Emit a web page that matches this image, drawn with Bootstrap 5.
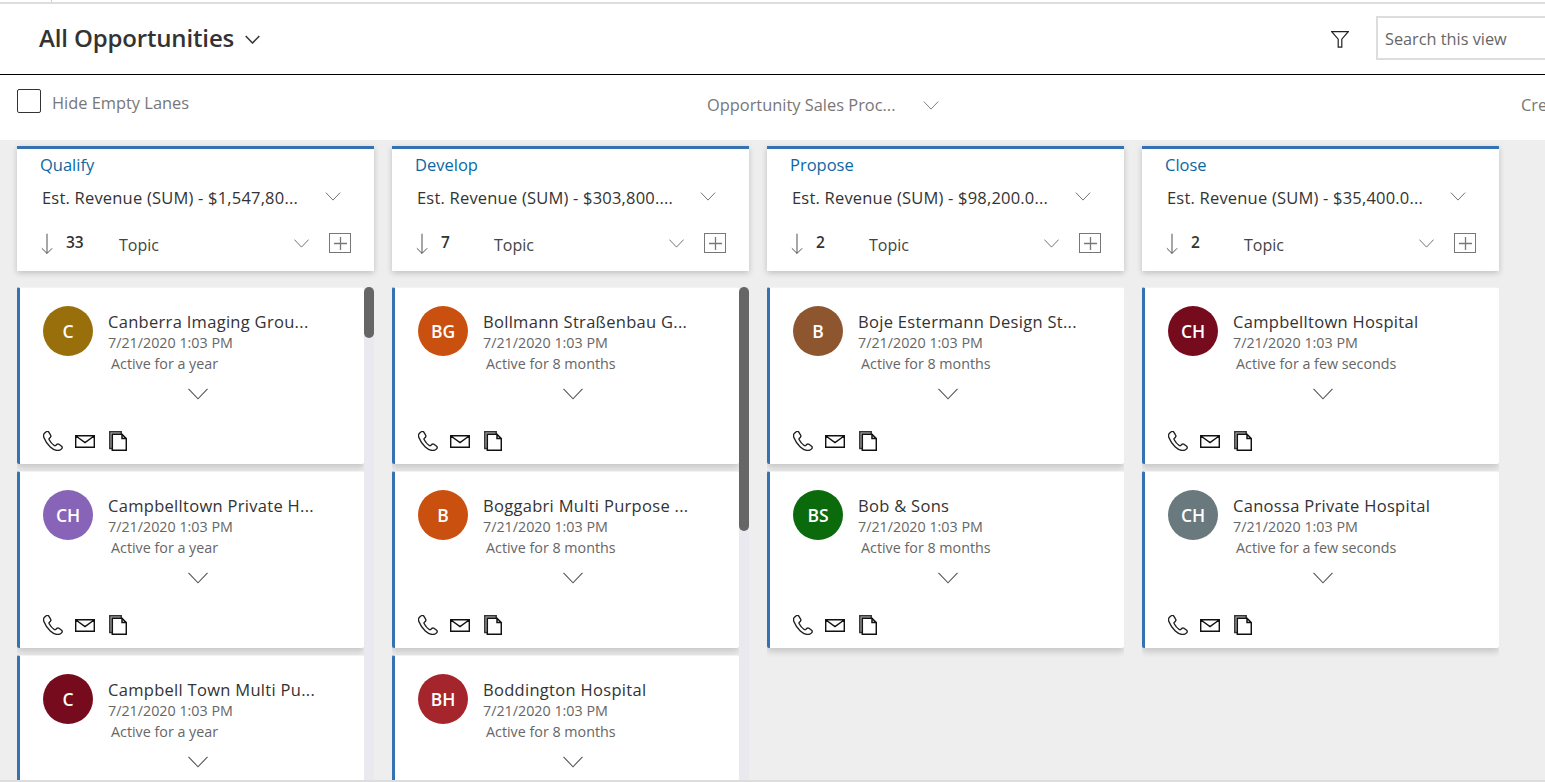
<!DOCTYPE html>
<html lang="en">
<head>
<meta charset="utf-8">
<title>All Opportunities</title>
<link href="https://cdn.jsdelivr.net/npm/bootstrap@5.3.0/dist/css/bootstrap.min.css" rel="stylesheet">
<style>
html,body{height:782px;overflow:hidden;background:#fff}
body{font-family:"Open Sans","Noto Sans",sans-serif;color:#333;font-size:14px}
.topline{height:4px;border-bottom:2px solid #ddd}
.topline i{display:block;width:1px;height:2px;margin-left:51px;background:#ccc}
.viewhead{height:71px;border-bottom:1px solid #000;padding-left:39px}
.viewtitle{font-size:24px;font-weight:600;color:#333;letter-spacing:-.15px;margin:0 11px 3px 0;line-height:1}
.searchbox{flex:0 0 169px;height:44px;margin:0 0 2px 27px;border:2px solid #ddd;border-right:0;padding:2px 0 0 7px;font-size:16.3px;color:#666}
.toolbar{height:65px;padding-left:17px;color:#777;font-size:16.400px;white-space:nowrap}
.fakecheck{width:24px;height:24px;border:1px solid #333;border-radius:2px;margin:-14px 11px 0 0;flex:none}
.hidelabel{flex:0 0 655px;margin-top:-9px}
.procname{flex:0 0 216px;margin-top:-4px}
.procchev{margin:-4px 582px 0 0;flex:none}
.crelabel{flex:none;margin-top:-4px}
.board{height:642px;background:#eee;border-bottom:2px solid #ddd;padding:6px 0 0 17px;gap:18px;overflow:hidden}
.lane{flex:0 0 357px;min-width:0}
.lanehead{height:125px;background:#fff;border-top:3px solid #3572b4;box-shadow:0 2px 6px rgba(0,0,0,.2);padding:5px 23px 0 23px;margin-bottom:16px}
.stage{font-size:16.5px;line-height:22px;color:#0b68a4}
.sumrow{margin-top:11px;margin-left:2px;height:22px;font-size:16.5px;font-weight:500;color:#333;letter-spacing:.2px;white-space:nowrap}
.sumtext{flex:0 0 283px}
.sortrow{margin-top:22px;height:26px;padding-left:1px}
.sortcount{flex:0 0 53px;font-size:15.500px;font-weight:600;margin:-3px 0 0 13px;color:#333}
.sorttopic{flex:0 0 175px;font-size:16px;color:#444;margin-top:1px}
.sortchev{margin-bottom:2px;color:#555;flex:none}
.addbox{width:22px;height:20px;border:1.5px solid #777;margin:-2px 0 0 20px;flex:none}
.lanebody{height:493px;overflow:hidden;position:relative}
.lanescroll{width:357px}
.lanebar{position:absolute;right:0;top:0;bottom:0;width:10px;background:#e9e9ef}
.lanebar i{display:block;width:10px;background:#666;border-radius:5px}
.lanecard{width:347px;height:177px;background:#fff;border-left:3px solid #3572b4;border-radius:2px;box-shadow:0 4px 6px rgba(0,0,0,.16);margin-bottom:7px;padding:18px 0 0 23px;border-top:1px solid #f3f3f3}
.lanecard.wide{width:357px}
.persona{width:50px;height:50px;border-radius:50%;color:#fff;font-size:17.5px;font-weight:600;flex:none;margin-right:15px}
.cardname{font-size:16.5px;font-weight:500;color:#333;letter-spacing:.3px;line-height:22px;margin-top:5px;white-space:nowrap}
.carddate{font-size:14.300px;color:#666;line-height:19px}
.cardage{font-size:14.300px;color:#666;line-height:20px;margin:2px 0 0 3px}
.cardchev{margin:14px 0 0 145px;height:14px;color:#555}
.cardchev svg{display:block}
.cardicons{margin:29px 0 0 0;gap:12px}
.b1{background:#986f0b}.b2{background:#8764b8}.b3{background:#750b1c}.b4{background:#ca5010}
.b5{background:#a4262c}.b6{background:#8e562e}.b7{background:#0b6a0b}.b8{background:#69797e}
</style>
</head>
<body>
<svg width="0" height="0" class="d-block position-absolute">
<symbol id="chev" viewBox="0 0 20 12"><path d="M.5.8 10 10.800 19.500.8" fill="none" stroke="currentColor" stroke-width="1.100"/></symbol>
<symbol id="phone" viewBox="0 0 20 20"><path d="M3.200.8 1.200 2.600C.2 3.700.4 5.300 1 6.800c1.300 3.300 3.600 6.700 6.300 9.300 2 1.900 4.300 3.100 6.700 3.300 1.900.2 3.500-.2 4.600-1.500.9-1 .8-1.900 0-2.600l-2.600-2c-.8-.6-1.500-.5-2.200.1l-1.100 1.100c-.5.400-1 .4-1.500 0-2-1.500-3.800-3.500-5-5.800-.3-.6-.3-1 .2-1.400l1-1c.6-.7.700-1.400.2-2.100L5.800 1.100C5.100.2 4-.1 3.200.8Z" fill="none" stroke="#222" stroke-width="1.400"/></symbol>
<symbol id="mail" viewBox="0 0 20 13"><path d="M.7.7h18.600v11.600H.7zM.9 1 10 7.600 19.100 1" fill="none" stroke="#111" stroke-width="1.400"/></symbol>
<symbol id="doc" viewBox="0 0 18 20"><path d="M3 17.500H.8V.8h11.400v2.500" fill="#bbb" stroke="#333" stroke-width="1.500"/><path d="M3.300 3.300h9.700l4.300 4.300v11.700h-14zM13 3.300v4.300h4.300" fill="#fff" stroke="#111" stroke-width="1.500"/></symbol>
</svg>

<div class="topline"><i></i></div>
<header class="viewhead d-flex align-items-center">
  <span class="viewtitle">All Opportunities</span>
  <svg width="15" height="9" viewBox="0 0 15 9"><path d="M.7 1 7.500 8 14.300 1" fill="none" stroke="#333" stroke-width="1.500"/></svg>
  <svg class="ms-auto" width="18" height="17" viewBox="0 0 18 17"><path d="M.7.7h16.600l-6.500 7.500v8H7.200v-8z" fill="none" stroke="#222" stroke-width="1.200"/></svg>
  <div class="searchbox d-flex align-items-center">Search this view</div>
</header>
<div class="toolbar d-flex align-items-center">
  <span class="fakecheck"></span>
  <span class="hidelabel">Hide Empty Lanes</span>
  <span class="procname">Opportunity Sales Proc...</span>
  <svg class="procchev" width="16" height="9" style="color:#666"><use href="#chev"/></svg>
  <span class="crelabel">Cre</span>
</div>

<main class="board d-flex">

  <section class="lane">
    <div class="lanehead">
      <div class="stage">Qualify</div>
      <div class="sumrow d-flex align-items-center"><span class="sumtext">Est. Revenue (SUM) - $1,547,80...</span><svg width="16" height="9" style="color:#555" class="mb-1"><use href="#chev"/></svg></div>
      <div class="sortrow d-flex align-items-center">
        <svg width="14" height="24" viewBox="0 0 14 24"><path d="M7 0v23M1 17l6 6 6-6" fill="none" stroke="#444" stroke-width="1.100"/></svg>
        <span class="sortcount">33</span><span class="sorttopic">Topic</span>
        <svg width="15" height="9" class="sortchev"><use href="#chev"/></svg>
        <span class="addbox d-flex align-items-center justify-content-center"><svg width="13" height="13" viewBox="0 0 13 13"><path d="M6.500 0v13M0 6.500h13" stroke="#777" stroke-width="1.300"/></svg></span>
      </div>
    </div>
    <div class="lanebody">
      <div class="lanescroll">
        <article class="lanecard">
          <div class="d-flex"><span class="persona b1 d-flex align-items-center justify-content-center">C</span><div><div class="cardname">Canberra Imaging Grou...</div><div class="carddate">7/21/2020 1:03 PM</div><div class="cardage">Active for a year</div></div></div>
          <div class="cardchev"><svg width="20" height="12"><use href="#chev"/></svg></div>
          <div class="cardicons d-flex"><svg width="20" height="20"><use href="#phone"/></svg><svg width="20" height="13" class="mt-1"><use href="#mail"/></svg><svg width="18" height="20" style="margin-left:2px"><use href="#doc"/></svg></div>
        </article>
        <article class="lanecard">
          <div class="d-flex"><span class="persona b2 d-flex align-items-center justify-content-center">CH</span><div><div class="cardname">Campbelltown Private H...</div><div class="carddate">7/21/2020 1:03 PM</div><div class="cardage">Active for a year</div></div></div>
          <div class="cardchev"><svg width="20" height="12"><use href="#chev"/></svg></div>
          <div class="cardicons d-flex"><svg width="20" height="20"><use href="#phone"/></svg><svg width="20" height="13" class="mt-1"><use href="#mail"/></svg><svg width="18" height="20" style="margin-left:2px"><use href="#doc"/></svg></div>
        </article>
        <article class="lanecard">
          <div class="d-flex"><span class="persona b3 d-flex align-items-center justify-content-center">C</span><div><div class="cardname">Campbell Town Multi Pu...</div><div class="carddate">7/21/2020 1:03 PM</div><div class="cardage">Active for a year</div></div></div>
          <div class="cardchev"><svg width="20" height="12"><use href="#chev"/></svg></div>
        </article>
      </div>
      <div class="lanebar"><i style="height:51px"></i></div>
    </div>
  </section>

  <section class="lane">
    <div class="lanehead">
      <div class="stage">Develop</div>
      <div class="sumrow d-flex align-items-center"><span class="sumtext">Est. Revenue (SUM) - $303,800....</span><svg width="16" height="9" style="color:#555" class="mb-1"><use href="#chev"/></svg></div>
      <div class="sortrow d-flex align-items-center">
        <svg width="14" height="24" viewBox="0 0 14 24"><path d="M7 0v23M1 17l6 6 6-6" fill="none" stroke="#444" stroke-width="1.100"/></svg>
        <span class="sortcount">7</span><span class="sorttopic">Topic</span>
        <svg width="15" height="9" class="sortchev"><use href="#chev"/></svg>
        <span class="addbox d-flex align-items-center justify-content-center"><svg width="13" height="13" viewBox="0 0 13 13"><path d="M6.500 0v13M0 6.500h13" stroke="#777" stroke-width="1.300"/></svg></span>
      </div>
    </div>
    <div class="lanebody">
      <div class="lanescroll">
        <article class="lanecard">
          <div class="d-flex"><span class="persona b4 d-flex align-items-center justify-content-center">BG</span><div><div class="cardname">Bollmann Straßenbau G...</div><div class="carddate">7/21/2020 1:03 PM</div><div class="cardage">Active for 8 months</div></div></div>
          <div class="cardchev"><svg width="20" height="12"><use href="#chev"/></svg></div>
          <div class="cardicons d-flex"><svg width="20" height="20"><use href="#phone"/></svg><svg width="20" height="13" class="mt-1"><use href="#mail"/></svg><svg width="18" height="20" style="margin-left:2px"><use href="#doc"/></svg></div>
        </article>
        <article class="lanecard">
          <div class="d-flex"><span class="persona b4 d-flex align-items-center justify-content-center">B</span><div><div class="cardname">Boggabri Multi Purpose ...</div><div class="carddate">7/21/2020 1:03 PM</div><div class="cardage">Active for 8 months</div></div></div>
          <div class="cardchev"><svg width="20" height="12"><use href="#chev"/></svg></div>
          <div class="cardicons d-flex"><svg width="20" height="20"><use href="#phone"/></svg><svg width="20" height="13" class="mt-1"><use href="#mail"/></svg><svg width="18" height="20" style="margin-left:2px"><use href="#doc"/></svg></div>
        </article>
        <article class="lanecard">
          <div class="d-flex"><span class="persona b5 d-flex align-items-center justify-content-center">BH</span><div><div class="cardname">Boddington Hospital</div><div class="carddate">7/21/2020 1:03 PM</div><div class="cardage">Active for 8 months</div></div></div>
          <div class="cardchev"><svg width="20" height="12"><use href="#chev"/></svg></div>
        </article>
      </div>
      <div class="lanebar"><i style="height:244px"></i></div>
    </div>
  </section>

  <section class="lane">
    <div class="lanehead">
      <div class="stage">Propose</div>
      <div class="sumrow d-flex align-items-center"><span class="sumtext">Est. Revenue (SUM) - $98,200.0...</span><svg width="16" height="9" style="color:#555" class="mb-1"><use href="#chev"/></svg></div>
      <div class="sortrow d-flex align-items-center">
        <svg width="14" height="24" viewBox="0 0 14 24"><path d="M7 0v23M1 17l6 6 6-6" fill="none" stroke="#444" stroke-width="1.100"/></svg>
        <span class="sortcount">2</span><span class="sorttopic">Topic</span>
        <svg width="15" height="9" class="sortchev"><use href="#chev"/></svg>
        <span class="addbox d-flex align-items-center justify-content-center"><svg width="13" height="13" viewBox="0 0 13 13"><path d="M6.500 0v13M0 6.500h13" stroke="#777" stroke-width="1.300"/></svg></span>
      </div>
    </div>
    <div class="lanebody">
      <div class="lanescroll">
        <article class="lanecard wide">
          <div class="d-flex"><span class="persona b6 d-flex align-items-center justify-content-center">B</span><div><div class="cardname">Boje Estermann Design St...</div><div class="carddate">7/21/2020 1:03 PM</div><div class="cardage">Active for 8 months</div></div></div>
          <div class="cardchev"><svg width="20" height="12"><use href="#chev"/></svg></div>
          <div class="cardicons d-flex"><svg width="20" height="20"><use href="#phone"/></svg><svg width="20" height="13" class="mt-1"><use href="#mail"/></svg><svg width="18" height="20" style="margin-left:2px"><use href="#doc"/></svg></div>
        </article>
        <article class="lanecard wide">
          <div class="d-flex"><span class="persona b7 d-flex align-items-center justify-content-center">BS</span><div><div class="cardname">Bob &amp; Sons</div><div class="carddate">7/21/2020 1:03 PM</div><div class="cardage">Active for 8 months</div></div></div>
          <div class="cardchev"><svg width="20" height="12"><use href="#chev"/></svg></div>
          <div class="cardicons d-flex"><svg width="20" height="20"><use href="#phone"/></svg><svg width="20" height="13" class="mt-1"><use href="#mail"/></svg><svg width="18" height="20" style="margin-left:2px"><use href="#doc"/></svg></div>
        </article>
      </div>
    </div>
  </section>

  <section class="lane">
    <div class="lanehead">
      <div class="stage">Close</div>
      <div class="sumrow d-flex align-items-center"><span class="sumtext">Est. Revenue (SUM) - $35,400.0...</span><svg width="16" height="9" style="color:#555" class="mb-1"><use href="#chev"/></svg></div>
      <div class="sortrow d-flex align-items-center">
        <svg width="14" height="24" viewBox="0 0 14 24"><path d="M7 0v23M1 17l6 6 6-6" fill="none" stroke="#444" stroke-width="1.100"/></svg>
        <span class="sortcount">2</span><span class="sorttopic">Topic</span>
        <svg width="15" height="9" class="sortchev"><use href="#chev"/></svg>
        <span class="addbox d-flex align-items-center justify-content-center"><svg width="13" height="13" viewBox="0 0 13 13"><path d="M6.500 0v13M0 6.500h13" stroke="#777" stroke-width="1.300"/></svg></span>
      </div>
    </div>
    <div class="lanebody">
      <div class="lanescroll">
        <article class="lanecard wide">
          <div class="d-flex"><span class="persona b3 d-flex align-items-center justify-content-center">CH</span><div><div class="cardname">Campbelltown Hospital</div><div class="carddate">7/21/2020 1:03 PM</div><div class="cardage">Active for a few seconds</div></div></div>
          <div class="cardchev"><svg width="20" height="12"><use href="#chev"/></svg></div>
          <div class="cardicons d-flex"><svg width="20" height="20"><use href="#phone"/></svg><svg width="20" height="13" class="mt-1"><use href="#mail"/></svg><svg width="18" height="20" style="margin-left:2px"><use href="#doc"/></svg></div>
        </article>
        <article class="lanecard wide">
          <div class="d-flex"><span class="persona b8 d-flex align-items-center justify-content-center">CH</span><div><div class="cardname">Canossa Private Hospital</div><div class="carddate">7/21/2020 1:03 PM</div><div class="cardage">Active for a few seconds</div></div></div>
          <div class="cardchev"><svg width="20" height="12"><use href="#chev"/></svg></div>
          <div class="cardicons d-flex"><svg width="20" height="20"><use href="#phone"/></svg><svg width="20" height="13" class="mt-1"><use href="#mail"/></svg><svg width="18" height="20" style="margin-left:2px"><use href="#doc"/></svg></div>
        </article>
      </div>
    </div>
  </section>

</main>
<script src="https://cdn.jsdelivr.net/npm/bootstrap@5.3.0/dist/js/bootstrap.bundle.min.js"></script>
</body>
</html>
